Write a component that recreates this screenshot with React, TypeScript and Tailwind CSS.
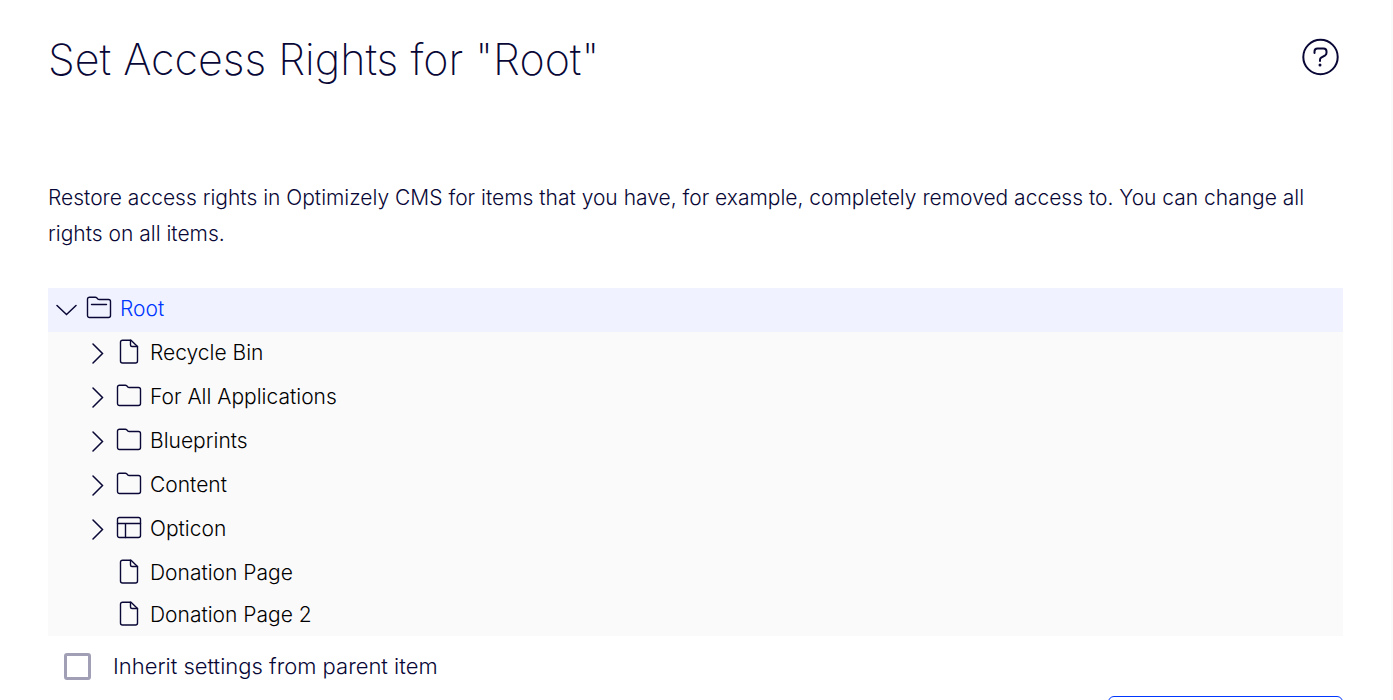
import React, { useState } from 'react';

type IconName = 'folder' | 'folder-open' | 'page' | 'site';

type Item = {
  id: number;
  name: string;
  icon: IconName;
  hasChildren: boolean;
};

const items: Item[] = [
  { id: 1, name: 'Recycle Bin', icon: 'page', hasChildren: true },
  { id: 2, name: 'For All Applications', icon: 'folder', hasChildren: true },
  { id: 3, name: 'Blueprints', icon: 'folder', hasChildren: true },
  { id: 4, name: 'Content', icon: 'folder', hasChildren: true },
  { id: 5, name: 'Opticon', icon: 'site', hasChildren: true },
  { id: 6, name: 'Donation Page', icon: 'page', hasChildren: false },
  { id: 7, name: 'Donation Page 2', icon: 'page', hasChildren: false },
];

const folderPath = 'M1.500 4.200a2 2 0 0 1 2-2h5.800a2 2 0 0 1 1.400.6l1.100 1.100a2 2 0 0 0 1.400.6h9.300a2 2 0 0 1 2 2v14a2 2 0 0 1-2 2H3.500a2 2 0 0 1-2-2z';

const ItemIcon = ({ name }: { name: IconName }) => (
  <svg className="block w-[26px] h-[26px] mb-0.5 shrink-0" viewBox="0 0 26 26" fill="none" stroke="currentColor" strokeWidth="1.4" strokeLinejoin="round" strokeLinecap="round">
    {name === 'folder' && <path d={folderPath} />}
    {name === 'folder-open' && (
      <>
        <path d={folderPath} />
        <path d="M5.500 9.500h15" />
      </>
    )}
    {name === 'page' && (
      <>
        <path d="M6.500 1.200H15l6.500 6.300V22a2 2 0 0 1-2 2h-13a2 2 0 0 1-2-2V3.200a2 2 0 0 1 2-2z" />
        <path d="M14.500 1.200V6a1.500 1.500 0 0 0 1.500 1.500h5.500" />
      </>
    )}
    {name === 'site' && (
      <>
        <rect x="1.500" y="2.500" width="23" height="20" rx="2" />
        <path d="M1.500 8.500h23M9.500 8.500v14" />
      </>
    )}
  </svg>
);

const Chevron = ({ open }: { open: boolean }) => (
  <svg className="block w-[22px] h-[22px]" viewBox="0 0 22 22" fill="none" stroke="currentColor" strokeWidth="1.5" strokeLinecap="round">
    {open ? <path d="M1 6.500l9.500 9 9.500-9" /> : <path d="M7 1l9.500 9.500L7 20" />}
  </svg>
);

const App = () => {
  const [expanded, setExpanded] = useState(true);
  const [inherit, setInherit] = useState(false);

  return (
    <div className="h-screen overflow-hidden bg-white border-r-2 border-[#fafafa] pl-12 pr-12 text-[#080736] font-['Inter',sans-serif]">
      <header className="flex items-start justify-between pt-8">
        <h1 className="text-[43px] leading-[54px] font-extralight">Set Access Rights for "Root"</h1>
        <button type="button" aria-label="Help" className="mt-1.5 mr-[3px]">
          <svg className="block w-[38px] h-[38px]" viewBox="0 0 38 38" fill="none" stroke="currentColor" strokeWidth="2">
            <circle cx="18.500" cy="19" r="17.200" />
            <path d="M12.500 15v-1.500a3 3 0 0 1 3-3h6a3 3 0 0 1 3 3v1.300a3 3 0 0 1-1.300 2.500l-4 2.400a2.500 2.500 0 0 0-1.200 2.200v1" strokeLinecap="round" />
            <circle cx="18" cy="27" r="1.500" fill="currentColor" stroke="none" />
          </svg>
        </button>
      </header>

      <p className="mt-[94px] text-[21px] leading-9 font-light">
        Restore access rights in Optimizely CMS for items that you have, for example, completely removed access to. You can change all rights on all items.
      </p>

      <div className="mt-9 bg-[#fafafa] text-[21px] leading-7 font-light">
        <div className="flex items-center h-11 pl-2 bg-[#f0f2ff]">
          <button type="button" aria-label="Toggle Root" onClick={() => setExpanded(!expanded)}>
            <Chevron open={expanded} />
          </button>
          <div className="ml-2 pb-0.5 flex items-center gap-2">
            <ItemIcon name="folder-open" />
            <a href="#root" className="text-[#0037ff]">Root</a>
          </div>
        </div>
        {expanded && (
          <ul className="text-black">
            {items.map((item) => (
              <li key={item.id} className="flex items-center h-11 last:h-10 pl-[38px]">
                <div className="w-[22px] h-[22px] text-[#080736]">
                  {item.hasChildren && (
                    <button type="button" aria-label={`Toggle ${item.name}`} className="block">
                      <Chevron open={false} />
                    </button>
                  )}
                </div>
                <div className="ml-2 pb-0.5 flex items-center gap-2">
                  <span className="text-[#080736]"><ItemIcon name={item.icon} /></span>
                  <a href={`#item-${item.id}`}>{item.name}</a>
                </div>
              </li>
            ))}
          </ul>
        )}
      </div>

      <div className="flex items-center h-[60px] pl-4">
        <input
          id="inherit"
          type="checkbox"
          checked={inherit}
          onChange={(e) => setInherit(e.target.checked)}
          className="appearance-none w-[27px] h-[27px] border-3 border-[#a19fb5] rounded-[3px] checked:bg-[#0037ff]"
        />
        <label htmlFor="inherit" className="pl-[22px] text-[22px] leading-7 font-light">Inherit settings from parent item</label>
      </div>

      <div className="flex justify-end">
        <button type="button" aria-label="Add" className="w-[235px] h-12 border border-[#0037ff] rounded-md" />
      </div>
    </div>
  );
};

export default App;
